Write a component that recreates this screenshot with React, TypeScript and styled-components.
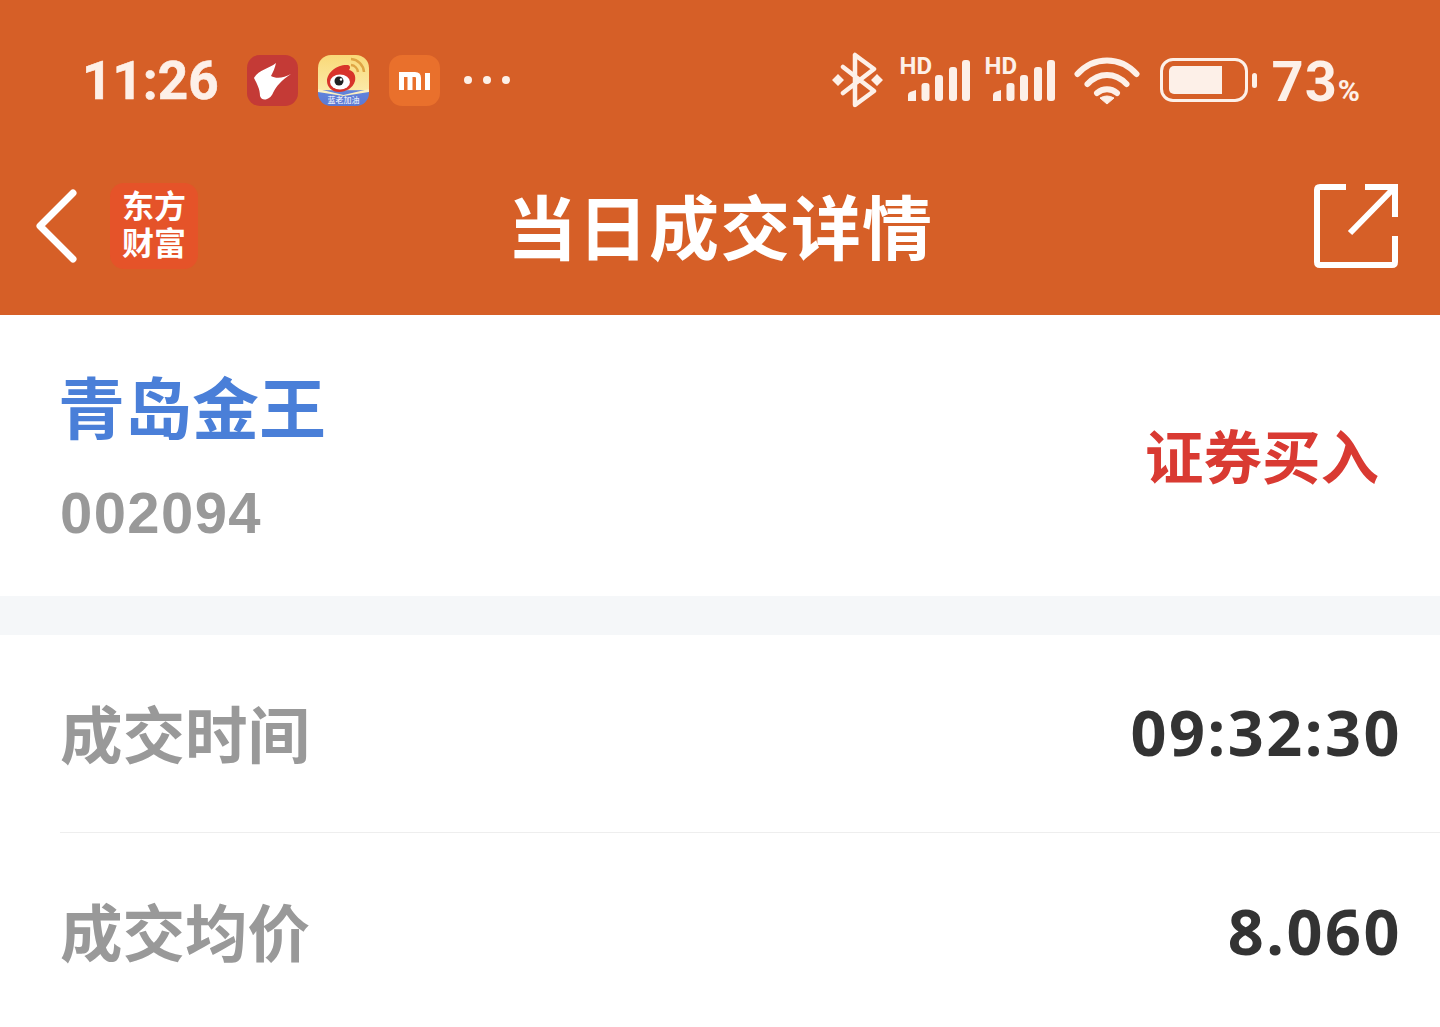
import React from "react";
import styled, { createGlobalStyle } from "styled-components";

const CJK = `"Noto Sans CJK SC", sans-serif`;
const LATIN = `"Roboto", "Noto Sans CJK SC", sans-serif`;
const ICON = "#fdf0e8";
const batteryLevel = 73;

const Global = createGlobalStyle`
  html, body {
    margin: 0;
    padding: 0;
    background: #fff;
    overflow: hidden;
  }
  body {
    font-family: ${CJK};
  }
`;

const rows = [
  { label: "成交时间", value: "09:32:30" },
  { label: "成交均价", value: "8.060" },
];

const App: React.FC = () => {
  return (
    <Page>
      <Global />
      <Header>
        <StatusBar>
          <StatusLeft>
            <Clock>11:26</Clock>
            <AppBadge $bg="#c43a36">
              <svg width="51" height="51" viewBox="0 0 51 51">
                <path
                  d="M7 23 C12 14 22 14 29 8 C28 13 26 17 24 21 C29 24 37 23 44 19 C35 25 29 31 26 38 C23 45 15 47 13 41 C13 34 10 29 7 23Z"
                  fill="#fff"
                />
              </svg>
            </AppBadge>
            <AppBadge $bg="linear-gradient(#f9d978 0%, #fbe9a6 68%, #6184dc 70%, #5c78d2 100%)">
              <svg width="51" height="51" viewBox="0 0 51 51">
                <path d="M33 4 A14 14 0 0 1 46 17" fill="none" stroke="#dfa544" strokeWidth="2.5" />
                <path d="M33 10 A8 8 0 0 1 40 17" fill="none" stroke="#dfa544" strokeWidth="2.5" />
                <path
                  d="M9 26 C9 17 20 9 30 10 C33 11 32 14 31 15 C36 16 38 21 37 26 C35 33 28 37 21 37 C14 37 9 32 9 26Z"
                  fill="#d8332a"
                />
                <ellipse cx="22" cy="27" rx="10" ry="7.5" fill="#fff" />
                <circle cx="21" cy="26" r="4.5" fill="#222" />
                <circle cx="23" cy="24.5" r="1.2" fill="#fff" />
                <path d="M0 34 L25.5 40 L51 34 L51 37 L25.5 41 L0 37Z" fill="#fdf0c0" />
              </svg>
              <BadgeCaption>蓝老加油</BadgeCaption>
            </AppBadge>
            <AppBadge $bg="#e9702c">
              <svg width="51" height="51" viewBox="0 0 51 51">
                <path
                  d="M10 17 H26 Q32 17 32 23 V35 H27 V23 Q27 22 26 22 H23.5 V35 H18.5 V22 H15 V35 H10Z"
                  fill="#fff"
                />
                <rect x="36" y="18" width="5" height="17" fill="#fff" />
              </svg>
            </AppBadge>
            <Dots>
              <Dot />
              <Dot />
              <Dot />
            </Dots>
          </StatusLeft>
          <StatusRight>
            <BluetoothIcon width="52" height="56" viewBox="0 0 52 56">
              <path
                d="M23 3 V53 L42 39 L11 15 M23 3 L42 17 L11 41"
                fill="none"
                stroke={ICON}
                strokeWidth="4.5"
                strokeLinecap="round"
                strokeLinejoin="round"
              />
              <path d="M6 22 L12 28 L6 34 L0 28Z M45 22 L51 28 L45 34 L39 28Z" fill={ICON} />
            </BluetoothIcon>
            <SignalIcon />
            <SignalIcon />
            <WifiIcon width="66" height="50" viewBox="0 0 66 50">
              <g fill="none" stroke={ICON} strokeWidth="6" strokeLinecap="round">
                <path d="M3.5 19 C20 1 46 1 62.5 19" />
                <path d="M13.5 29 C25 17 41 17 52.5 29" />
                <path d="M23 38 C29 33 37 33 43 38" />
              </g>
              <path d="M33 49 L26 43 Q33 39 40 43Z" fill={ICON} stroke={ICON} strokeLinejoin="round" />
            </WifiIcon>
            <Battery>
              <BatteryBody>
                <BatteryFill style={{ width: `${batteryLevel}%` }} />
              </BatteryBody>
              <BatteryCap />
            </Battery>
            <Percent>
              73<small>%</small>
            </Percent>
          </StatusRight>
        </StatusBar>
        <NavBar>
          <NavSide>
            <svg width="44" height="76" viewBox="0 0 44 76">
              <path
                d="M38 5 L5 38 L38 71"
                fill="none"
                stroke="#fff"
                strokeWidth="7"
                strokeLinecap="round"
                strokeLinejoin="round"
              />
            </svg>
            <Logo>东方财富</Logo>
          </NavSide>
          <NavTitle>当日成交详情</NavTitle>
          <ShareButton>
            <svg width="86" height="86" viewBox="0 0 86 86">
              <path
                d="M33 4 H7 Q4 4 4 7 V79 Q4 82 7 82 H79 Q82 82 82 79 V53"
                fill="none"
                stroke="#fff"
                strokeWidth="6"
              />
              <path d="M52 4 H82 V34 M82 4 L37 50" fill="none" stroke="#fff" strokeWidth="6" />
            </svg>
          </ShareButton>
        </NavBar>
      </Header>
      <StockCard>
        <div>
          <StockName>青岛金王</StockName>
          <StockCode>002094</StockCode>
        </div>
        <TradeType>证券买入</TradeType>
      </StockCard>
      <Divider />
      <DetailList>
        {rows.map((row) => (
          <DetailRow key={row.label}>
            <DetailLabel>{row.label}</DetailLabel>
            <DetailValue>{row.value}</DetailValue>
          </DetailRow>
        ))}
      </DetailList>
    </Page>
  );
};

const SignalIcon: React.FC = () => (
  <SignalWrap>
    <HdLabel>HD</HdLabel>
    <svg width="64" height="42" viewBox="0 0 64 42">
      <path d="M0 41 V35 Q0 33 2 32 L8 30 V41Z" fill={ICON} />
      <rect x="13.5" y="23" width="8" height="18" rx="3" fill={ICON} />
      <rect x="27" y="15" width="8" height="26" rx="3" fill={ICON} />
      <rect x="41" y="7" width="8" height="34" rx="3" fill={ICON} />
      <rect x="54" y="0" width="8" height="41" rx="3" fill={ICON} />
    </svg>
  </SignalWrap>
);

const Page = styled.div`
  width: 1440px;
  height: 1027px;
  overflow: hidden;
  background: #fff;
`;

const Header = styled.header`
  height: 315px;
  background: #d65f27;
  display: flex;
  flex-direction: column;
`;

const StatusBar = styled.div`
  height: 160px;
  display: flex;
  justify-content: space-between;
  align-items: center;
  padding: 0 80px 0 82px;
`;

const StatusLeft = styled.div`
  display: flex;
  align-items: center;
  gap: 20px;
`;

const StatusRight = styled.div`
  display: flex;
  align-items: center;
  gap: 13px;
`;

const BluetoothIcon = styled.svg`
  margin-right: 3px;
`;

const WifiIcon = styled.svg`
  margin-left: 4px;
`;

const Clock = styled.div`
  font-family: ${LATIN};
  font-size: 53px;
  font-weight: 700;
  -webkit-text-stroke: 0.6px ${ICON};
  color: ${ICON};
  width: 145px;
  line-height: 1;
  margin-top: 3px;
`;

const AppBadge = styled.div<{ $bg: string }>`
  position: relative;
  width: 51px;
  height: 51px;
  border-radius: 13px;
  overflow: hidden;
  background: ${(p) => p.$bg};
`;

const BadgeCaption = styled.span`
  position: absolute;
  left: 0;
  right: 0;
  bottom: 1px;
  text-align: center;
  font-size: 8px;
  line-height: 10px;
  color: #fff;
`;

const Dots = styled.div`
  display: flex;
  gap: 11px;
  margin-left: 4px;
`;

const Dot = styled.span`
  width: 8px;
  height: 8px;
  border-radius: 50%;
  background: ${ICON};
`;

const SignalWrap = styled.div`
  position: relative;
  width: 72px;
  height: 44px;
  display: flex;
  align-items: flex-end;
  justify-content: flex-end;
`;

const HdLabel = styled.span`
  position: absolute;
  left: 0;
  top: -4px;
  font-family: ${LATIN};
  font-size: 24px;
  font-weight: 700;
  line-height: 24px;
  color: ${ICON};
`;

const Battery = styled.div`
  display: flex;
  align-items: center;
  gap: 4px;
  margin-left: 7px;
  margin-right: 2px;
`;

const BatteryBody = styled.div`
  width: 88px;
  height: 44px;
  box-sizing: border-box;
  border: 3.5px solid ${ICON};
  border-radius: 13px;
  padding: 5px 3px 5px 6px;
`;

const BatteryFill = styled.div`
  height: 100%;
  background: ${ICON};
  border-radius: 5px 0 0 5px;
`;

const BatteryCap = styled.span`
  width: 5px;
  height: 15px;
  border-radius: 2.5px;
  background: ${ICON};
`;

const Percent = styled.div`
  font-family: ${LATIN};
  font-size: 56px;
  font-weight: 700;
  letter-spacing: 1px;
  color: ${ICON};
  line-height: 1;
  margin-top: 3px;

  small {
    font-size: 30px;
    letter-spacing: 0;
  }
`;

const NavBar = styled.div`
  position: relative;
  flex: 1;
  display: flex;
  align-items: center;
  justify-content: space-between;
  padding: 0 41px 23px 35px;
`;

const NavSide = styled.div`
  display: flex;
  align-items: center;
  gap: 31px;
`;

const Logo = styled.div`
  width: 88px;
  height: 86px;
  box-sizing: border-box;
  padding: 3px 12px 0;
  border-radius: 14px;
  background: #e55329;
  color: #fff;
  text-align: center;
  font-size: 32px;
  font-weight: 700;
  line-height: 37px;
`;

const NavTitle = styled.h1`
  position: absolute;
  left: 0;
  right: 0;
  top: 25px;
  margin: 0;
  text-align: center;
  font-size: 70px;
  letter-spacing: 1px;
  line-height: 80px;
  font-weight: 700;
  color: #fff;
`;

const ShareButton = styled.div`
  display: flex;
`;

const StockCard = styled.section`
  height: 281px;
  box-sizing: border-box;
  padding: 46px 61px 0 58px;
  display: flex;
  justify-content: space-between;
  align-items: flex-start;
`;

const StockName = styled.div`
  font-size: 67px;
  line-height: 88px;
  font-weight: 700;
  color: #4a7fd8;
`;

const StockCode = styled.div`
  margin-top: 32px;
  margin-left: 2px;
  font-family: "Liberation Sans", sans-serif;
  font-size: 58px;
  letter-spacing: 1.4px;
  line-height: 64px;
  font-weight: 700;
  color: #999;
`;

const TradeType = styled.div`
  margin-top: 57px;
  font-size: 58.5px;
  line-height: 72px;
  font-weight: 700;
  color: #d93a32;
`;

const Divider = styled.div`
  height: 39px;
  background: #f5f7f9;
`;

const DetailList = styled.div`
  display: flex;
  flex-direction: column;
`;

const DetailRow = styled.div`
  height: 198px;
  margin-left: 60px;
  padding-right: 38px;
  box-sizing: border-box;
  display: flex;
  justify-content: space-between;
  align-items: center;
  border-bottom: 1px solid #eeeeee;

  &:last-child {
    border-bottom: none;
  }
`;

const DetailLabel = styled.div`
  font-size: 62.5px;
  font-weight: 700;
  color: #999;
  margin-bottom: 5px;
`;

const DetailValue = styled.div`
  font-family: "Noto Sans", sans-serif;
  font-size: 63px;
  letter-spacing: 2.5px;
  font-weight: 700;
  color: #333;
  margin-bottom: 4px;
`;

export default App;
